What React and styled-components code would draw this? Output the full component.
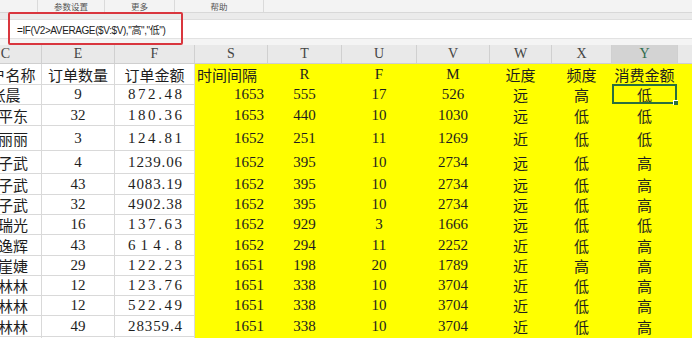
import styled, { createGlobalStyle } from "styled-components";

const GlobalStyle = createGlobalStyle`
  html, body {
    margin: 0;
    padding: 0;
    background: #ffffff;
    overflow: hidden;
  }
`

const Page = styled.div`
  position: relative;
  width: 692px;
  height: 338px;
  overflow: hidden;
  background: #ffffff;
  font-family: "Liberation Serif", "Noto Sans CJK SC", serif;
`

const MenuBar = styled.div`
  display: flex;
  align-items: stretch;
  height: 12px;
  background: #f3f3f3;
  border-bottom: 1px solid #d8d8d8;
  padding-left: 37px;
`

const Tab = styled.div`
  width: ${p => p.$w}px;
  flex: none;
  display: flex;
  align-items: center;
  justify-content: center;
  border-left: 1px solid #dadada;
  font-family: "Noto Sans CJK SC", "Noto Sans", sans-serif;
  font-size: 8.5px;
  line-height: 12px;
  color: #555;
  &:last-child{
    border-right: 1px solid #dadada;
  }
`

const Ribbon = styled.div`
  height: 6px;
  background: #ebebeb;
  border-bottom: 1px solid #dedede;
`

const FormulaBar = styled.div`
  height: 18px;
  display: flex;
  align-items: center;
  padding-left: 17px;
  background: #ffffff;
  font-family: "Liberation Sans", "Noto Sans CJK SC", sans-serif;
  font-size: 10px;
  letter-spacing: -0.4px;
  color: #222;
`

const Gap = styled.div`
  height: 6px;
  background: #f4f4f4;
  border-top: 1px solid #e2e2e2;
`

const RedBox = styled.div`
  position: absolute;
  left: 8px;
  top: 12px;
  width: 175px;
  height: 33px;
  box-sizing: border-box;
  border: 2px solid #d9363e;
  border-radius: 2px;
`

const Sheet = styled.div`
  overflow: hidden;
`

const Grid = styled.div`
  margin-left: -30px;
  display: flex;
  flex-direction: column;
`

const Row = styled.div`
  display: flex;
  height: ${p => p.$h}px;
  flex: none;
`

const HeadCell = styled.div`
  width: ${p => p.$w}px;
  flex: none;
  box-sizing: border-box;
  display: flex;
  align-items: center;
  justify-content: center;
  background: ${p => p.$active ? "#d3d3d3" : "#e9e9e9"};
  border-right: 1px solid #d0d0d0;
  border-bottom: 1px solid #cfcfcf;
  font-size: 14px;
  color: ${p => p.$active ? "#2f6b4c" : "#444"};
`

const Cell = styled.div`
  position: relative;
  width: ${p => p.$w}px;
  flex: none;
  box-sizing: border-box;
  display: flex;
  align-items: center;
  justify-content: ${p => p.$align === "right" ? "flex-end" : p.$align === "left" ? "flex-start" : p.$align === "spread" ? "space-between" : "center"};
  padding: ${p => p.$align === "right" ? "0 3px 0 0" : p.$align === "left" ? "0 0 0 2px" : p.$align === "spread" ? "0 12px 0 13px" : "0"};
  background: ${p => p.$fill ? "#ffff00" : "#ffffff"};
  border-right: 1px solid ${p => p.$fill ? "#ffff00" : "#d9d9d9"};
  border-bottom: 1px solid ${p => p.$fill ? "#ffff00" : "#d9d9d9"};
  font-size: 15px;
  color: #1e1e1e;
  white-space: nowrap;
`

const Selection = styled.div`
  position: absolute;
  inset: -1px 0 0 0;
  border: 2px solid #2a6e3f;
  pointer-events: none;
  &::after{
    content: "";
    position: absolute;
    right: -4px;
    bottom: -4px;
    width: 4px;
    height: 4px;
    background: #2a6e3f;
    border: 1px solid #fff;
  }
`

const cols = [
  { key: "C", w: 72, align: "center" },
  { key: "E", w: 73, align: "center" },
  { key: "F", w: 80, align: "spread" },
  { key: "S", w: 73, align: "right", fill: true },
  { key: "T", w: 74, align: "center", fill: true },
  { key: "U", w: 75, align: "center", fill: true },
  { key: "V", w: 73, align: "center", fill: true },
  { key: "W", w: 62, align: "center", fill: true },
  { key: "X", w: 60, align: "center", fill: true },
  { key: "Y", w: 66, align: "center", fill: true },
  { key: "Z", w: 40, align: "center", fill: true },
]

const titles = ["客户名称", "订单数量", "订单金额", "时间间隔", "R", "F", "M", "近度", "频度", "消费金额", ""]

const rows = [
  ["张晨", "9", "872.48", "1653", "555", "17", "526", "远", "高", "低", ""],
  ["刘平东", "32", "180.36", "1653", "440", "10", "1030", "远", "低", "低", ""],
  ["陈丽丽", "3", "124.81", "1652", "251", "11", "1269", "近", "低", "低", ""],
  ["王子武", "4", "1239.06", "1652", "395", "10", "2734", "远", "低", "高", ""],
  ["王子武", "43", "4083.19", "1652", "395", "10", "2734", "远", "低", "高", ""],
  ["王子武", "32", "4902.38", "1652", "395", "10", "2734", "远", "低", "高", ""],
  ["李瑞光", "16", "137.63", "1652", "929", "3", "1666", "远", "低", "低", ""],
  ["赵逸辉", "43", "614.8", "1652", "294", "11", "2252", "近", "低", "高", ""],
  ["孙崖婕", "29", "122.23", "1651", "198", "20", "1789", "近", "高", "高", ""],
  ["邓林林", "12", "123.76", "1651", "338", "10", "3704", "近", "低", "高", ""],
  ["邓林林", "12", "522.49", "1651", "338", "10", "3704", "近", "低", "高", ""],
  ["邓林林", "49", "28359.4", "1651", "338", "10", "3704", "近", "低", "高", ""],
  ["周晓雨", "21", "3398.57", "1651", "338", "10", "3704", "近", "低", "高", ""],
]

const heights = [20, 21, 25, 23, 21, 20, 20, 21, 20, 20, 20, 21, 20]

function Spread({ text }){
  return text.split("").map((ch, i) => <span key={i}>{ch}</span>)
}

export default function App(){
  return (
    <Page>
      <GlobalStyle />
      <MenuBar>
        <Tab $w={66}>参数设置</Tab>
        <Tab $w={69}>更多</Tab>
        <Tab $w={88}>帮助</Tab>
      </MenuBar>
      <Ribbon />
      <FormulaBar>=IF(V2&gt;AVERAGE($V:$V),"高","低")</FormulaBar>
      <Gap />
      <Sheet>
        <Grid>
          <Row $h={19}>
            {cols.map(c => (
              <HeadCell key={c.key} $w={c.w} $active={c.key === "Y"}>{c.key === "Z" ? "" : c.key}</HeadCell>
            ))}
          </Row>
          <Row $h={21}>
            {cols.map((c, i) => (
              <Cell key={c.key} $w={c.w} $fill={c.fill} $align={c.key === "S" ? "left" : "center"}>{titles[i]}</Cell>
            ))}
          </Row>
          {rows.map((r, ri) => (
            <Row key={ri} $h={heights[ri]}>
              {cols.map((c, i) => (
                <Cell key={c.key} $w={c.w} $fill={c.fill} $align={c.align}>
                  {c.align === "spread" ? <Spread text={r[i]} /> : r[i]}
                  {ri === 0 && c.key === "Y" && <Selection />}
                </Cell>
              ))}
            </Row>
          ))}
        </Grid>
      </Sheet>
      <RedBox />
    </Page>
  )
}
